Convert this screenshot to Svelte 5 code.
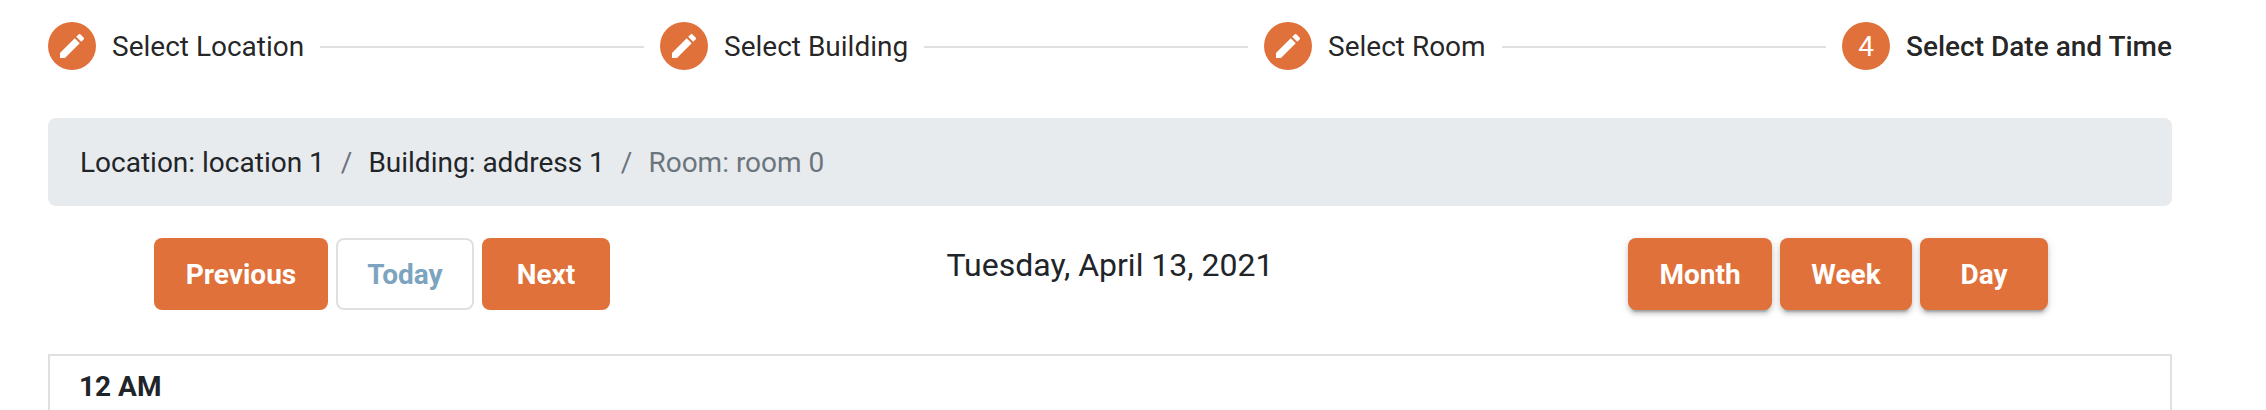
<script>
  const steps = [
    { label: 'Select Location', width: 612 },
    { label: 'Select Building', width: 604 },
    { label: 'Select Room', width: 578 },
    { label: 'Select Date and Time', active: true, width: 330 },
  ];
  const crumbs = ['Location: location 1', 'Building: address 1', 'Room: room 0'];
  const views = ['Month', 'Week', 'Day'];
</script>

<main>
  <header class="stepper">
    {#each steps as step, i}
      <div class="step" class:active={step.active} style="width: {step.width}px">
        <span class="badge">
          {#if step.active}
            <span class="number">{i + 1}</span>
          {:else}
            <svg viewBox="0 0 24 24" width="32" height="32" fill="#fff">
              <path d="M3 17.25V21h3.75L17.81 9.94l-3.75-3.75L3 17.25zM20.71 7.04c.39-.39.39-1.02 0-1.41l-2.34-2.34c-.39-.39-1.02-.39-1.41 0l-1.83 1.83 3.75 3.75 1.83-1.83z" />
            </svg>
          {/if}
        </span>
        <span class="label">{step.label}</span>
        {#if i < steps.length - 1}<span class="line"></span>{/if}
      </div>
    {/each}
  </header>

  <nav class="breadcrumb">
    {#each crumbs as crumb, i}
      {#if i > 0}<span class="sep">/</span>{/if}
      <span class:current={i === crumbs.length - 1}>{crumb}</span>
    {/each}
  </nav>

  <section class="toolbar">
    <div class="group start">
      <button class="previous">Previous</button>
      <button class="today">Today</button>
      <button class="next">Next</button>
    </div>
    <h3>Tuesday, April 13, 2021</h3>
    <div class="group end">
      {#each views as view}
        <button class="raised {view.toLowerCase()}">{view}</button>
      {/each}
    </div>
  </section>

  <section class="day-view">
    <strong>12 AM</strong>
  </section>
</main>

<style>
  :global(body) {
    margin: 0;
    background: #fff;
    overflow: hidden;
  }
  main {
    box-sizing: border-box;
    width: 2266px;
    height: 410px;
    padding: 22px 94px 0 48px;
    overflow: hidden;
    font-family: Roboto, sans-serif;
    font-size: 28px;
    line-height: 33px;
    color: #212529;
  }
  .stepper {
    display: flex;
    height: 48px;
  }
  .step {
    display: flex;
    flex: none;
    align-items: center;
    color: rgba(0, 0, 0, 0.87);
    white-space: nowrap;
  }
  .badge {
    display: flex;
    flex: none;
    align-items: center;
    justify-content: center;
    width: 48px;
    height: 48px;
    margin-right: 16px;
    border-radius: 50%;
    background: #e0713a;
    color: #fff;
  }
  .label,
  .number {
    padding-top: 1px;
  }
  .active .label {
    font-weight: 500;
  }
  .line {
    flex: 1;
    height: 2px;
    margin: 2px 16px 0;
    background: #e0e0e0;
  }
  .breadcrumb {
    display: flex;
    box-sizing: border-box;
    height: 88px;
    margin-top: 48px;
    padding: 28px 32px 0;
    border-radius: 8px;
    background: #e8ebee;
  }
  .sep {
    padding: 0 16px;
    color: #6c757d;
  }
  .current {
    color: #6c757d;
  }
  .toolbar {
    display: grid;
    grid-template-columns: 1fr auto 1fr;
    height: 72px;
    margin-top: 32px;
    padding: 0 106px;
  }
  .group {
    display: flex;
    gap: 8px;
  }
  .end {
    justify-content: flex-end;
    padding-right: 18px;
  }
  h3 {
    margin: 8px 0 0;
    font-size: 32px;
    font-weight: 400;
    line-height: 38px;
  }
  button {
    box-sizing: border-box;
    height: 72px;
    padding: 20px 0 19px;
    border: 0;
    border-radius: 8px;
    background: #e0713a;
    color: #fff;
    font: 700 28px/33px Roboto, sans-serif;
  }
  .previous { width: 174px; }
  .today {
    width: 138px;
    padding: 18px 0 17px;
    border: 2px solid #e0e0e0;
    background: #fff;
    color: #7ca4c0;
  }
  .next { width: 128px; }
  .month { width: 144px; }
  .week { width: 132px; }
  .day { width: 128px; }
  .raised {
    box-shadow:
      0 6px 2px -4px rgba(0, 0, 0, 0.2),
      0 4px 4px 0 rgba(0, 0, 0, 0.14),
      0 2px 10px 0 rgba(0, 0, 0, 0.12);
  }
  .day-view {
    box-sizing: border-box;
    height: 120px;
    margin-top: 44px;
    padding: 14px 29px;
    border: 2px solid #e0e0e0;
  }
</style>
